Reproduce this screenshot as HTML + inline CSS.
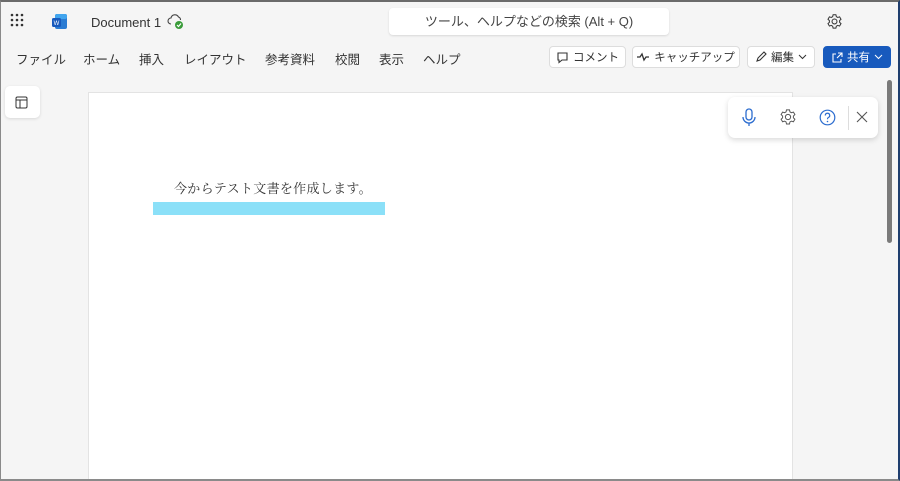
<!DOCTYPE html>
<html style="overflow:hidden;width:900px;height:481px"><head><meta charset="utf-8"><style>
*{box-sizing:border-box;margin:0;padding:0}
body{width:900px;height:481px;overflow:hidden;background:#f5f5f5;font-family:"Liberation Sans","Noto Sans CJK JP",sans-serif;position:relative;color:#242424}
.abs{position:absolute}
.win{position:absolute;left:0;top:0;width:900px;height:481px;border-top:2px solid #6b6b6b;border-left:1px solid #8a8a8a;border-bottom:2px solid #8a8a8a;border-right:2px solid #1f3e6e;z-index:5}
.menu span{position:absolute;top:49px;font-size:12.5px;color:#333}
.btn{position:absolute;top:46px;height:22px;background:#fff;border:1px solid #ddd;border-radius:4px;font-size:11.5px;color:#333;display:flex;align-items:center;justify-content:center;gap:4px}
</style></head><body>
<div class="win"></div>
<svg class="abs" style="left:10px;top:13px" width="16" height="16"><g fill="#333"><circle cx="2" cy="2" r="1.3"/><circle cx="7" cy="2" r="1.3"/><circle cx="12" cy="2" r="1.3"/><circle cx="2" cy="7" r="1.3"/><circle cx="7" cy="7" r="1.3"/><circle cx="12" cy="7" r="1.3"/><circle cx="2" cy="12" r="1.3"/><circle cx="7" cy="12" r="1.3"/><circle cx="12" cy="12" r="1.3"/></g></svg>
<svg class="abs" style="left:51px;top:13px" width="17" height="17"><rect x="4" y="1" width="12" height="15" rx="2" fill="#2b7cd3"/><rect x="4" y="1" width="12" height="5" rx="2" fill="#41a5ee"/><rect x="1" y="5" width="9" height="9" rx="1.5" fill="#185abd"/><text x="5.5" y="12" font-size="6" fill="#fff" text-anchor="middle" font-family="Liberation Sans">W</text></svg>
<div class="abs" style="left:91px;top:15px;font-size:13px;color:#333">Document 1</div>
<svg class="abs" style="left:167px;top:13px" width="17" height="17"><path d="M4 11a3 3 0 0 1 0-6a4 4 0 0 1 7.5-1a3 3 0 0 1 2 3" fill="none" stroke="#444" stroke-width="1.1"/><circle cx="12" cy="12" r="4" fill="#3a9c3a"/><path d="M10 12l1.5 1.5l2.5-3" stroke="#fff" stroke-width="1.2" fill="none"/></svg>
<div class="abs" style="left:389px;top:8px;width:280px;height:27px;background:#fff;border-radius:4px;box-shadow:0 1px 2px rgba(0,0,0,.12);font-size:13px;color:#444;text-align:center;line-height:27px">ツール、ヘルプなどの検索 (Alt + Q)</div>
<svg class="abs" style="left:826px;top:13px" width="17" height="17" viewBox="0 0 24 24"><path d="M12 8.5a3.5 3.5 0 1 0 0 7a3.5 3.5 0 0 0 0-7zM10 2.5h4l.6 2.7l2 1.1l2.6-.9l2 3.4l-2 1.9v2.4l2 1.9l-2 3.4l-2.6-.9l-2 1.1l-.6 2.7h-4l-.6-2.7l-2-1.1l-2.6.9l-2-3.4l2-1.9v-2.4l-2-1.9l2-3.4l2.6.9l2-1.1z" fill="none" stroke="#333" stroke-width="1.4"/></svg>
<div class="menu"><span style="left:16px">ファイル</span><span style="left:83px">ホーム</span><span style="left:139px">挿入</span><span style="left:184px">レイアウト</span><span style="left:265px">参考資料</span><span style="left:335px">校閲</span><span style="left:379px">表示</span><span style="left:423px">ヘルプ</span></div>
<div class="btn" style="left:549px;width:77px"><svg width="13" height="13"><path d="M2 2h9v7H6l-3 2.5V9H2z" fill="none" stroke="#333" stroke-width="1.1"/></svg>コメント</div>
<div class="btn" style="left:632px;width:108px"><svg width="13" height="10"><path d="M0 5h3l2-3l2 6l2-3h3" fill="none" stroke="#333" stroke-width="1.3"/></svg>キャッチアップ</div>
<div class="btn" style="left:747px;width:68px"><svg width="12" height="12"><path d="M2 10l1-3l6-6l2 2l-6 6z" fill="none" stroke="#333" stroke-width="1.1"/></svg>編集 <svg width="9" height="6"><path d="M1 1l3.5 3.5L8 1" fill="none" stroke="#333"/></svg></div>
<div class="btn" style="left:823px;width:68px;background:#185abd;border-color:#185abd;color:#fff"><svg width="12" height="12"><path d="M5 3H2v8h8V8M6 7l5-5M7 2h4v4" fill="none" stroke="#fff" stroke-width="1.1"/></svg>共有 <svg width="9" height="6"><path d="M1 1l3.5 3.5L8 1" fill="none" stroke="#fff"/></svg></div>
<div class="abs" style="left:5px;top:86px;width:35px;height:32px;background:#fff;border-radius:5px;box-shadow:0 1px 3px rgba(0,0,0,.12)"></div>
<svg class="abs" style="left:15px;top:96px" width="13" height="13"><rect x="1" y="1" width="11" height="11" rx="1.5" fill="none" stroke="#333"/><path d="M1 4h11M5 4v8" stroke="#333"/></svg>
<div class="abs" style="left:88px;top:92px;width:705px;height:389px;background:#fff;border:1px solid #e3e3e3;border-bottom:none"></div>
<div class="abs" style="left:174px;top:178px;font-size:13px;font-family:'Liberation Serif','Noto Serif CJK SC',serif;color:#333;letter-spacing:.3px">今からテスト文書を作成します。</div>
<div class="abs" style="left:153px;top:202px;width:232px;height:13px;background:#8be0f8"></div>
<div class="abs" style="left:728px;top:97px;width:150px;height:41px;background:#fff;border-radius:7px;box-shadow:0 2px 6px rgba(0,0,0,.15)"></div>
<svg class="abs" style="left:741px;top:108px" width="16" height="20"><rect x="5" y="1" width="6" height="11" rx="3" fill="none" stroke="#2b6ccf" stroke-width="1.3"/><path d="M2 9a6 6 0 0 0 12 0M8 15v3" fill="none" stroke="#2b6ccf" stroke-width="1.3"/></svg>
<svg class="abs" style="left:779px;top:108px" width="18" height="18" viewBox="0 0 24 24"><path d="M12 8.5a3.5 3.5 0 1 0 0 7a3.5 3.5 0 0 0 0-7zM10 2.5h4l.6 2.7l2 1.1l2.6-.9l2 3.4l-2 1.9v2.4l2 1.9l-2 3.4l-2.6-.9l-2 1.1l-.6 2.7h-4l-.6-2.7l-2-1.1l-2.6.9l-2-3.4l2-1.9v-2.4l-2-1.9l2-3.4l2.6.9l2-1.1z" fill="none" stroke="#555" stroke-width="1.3"/></svg>
<svg class="abs" style="left:819px;top:109px" width="17" height="17"><circle cx="8.5" cy="8.5" r="7.3" fill="none" stroke="#2b6ccf" stroke-width="1.2"/><path d="M6.3 6.5a2.2 2.2 0 1 1 3 2c-.8.4-.8.9-.8 1.7" fill="none" stroke="#2b6ccf" stroke-width="1.2"/><circle cx="8.5" cy="12.5" r=".8" fill="#2b6ccf"/></svg>
<div class="abs" style="left:848px;top:106px;width:1px;height:24px;background:#ddd"></div>
<svg class="abs" style="left:856px;top:111px" width="12" height="12"><path d="M1 1l10 10M11 1L1 11" stroke="#555" stroke-width="1.1"/></svg>
<div class="abs" style="left:887px;top:80px;width:5px;height:163px;background:#7a7a7a;border-radius:3px"></div>
</body></html>
